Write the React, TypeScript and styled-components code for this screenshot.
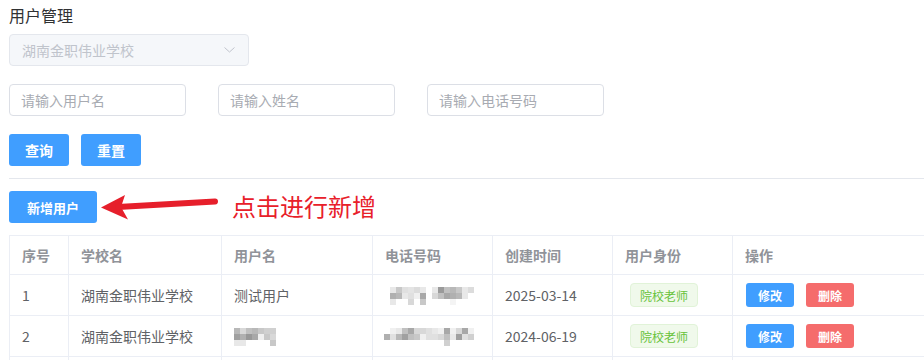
import React, {FC} from 'react';
import styled, {createGlobalStyle} from 'styled-components';

const GlobalStyle = createGlobalStyle`
  html, body {
    margin: 0;
    padding: 0;
    background: #ffffff;
    overflow: hidden;
  }
  body {
    font-family: 'Noto Sans CJK SC', 'Noto Sans', 'Liberation Sans', sans-serif;
    color: #606266;
  }
  * {
    box-sizing: border-box;
  }
`;

type Shade = number;

interface User {
  id: number;
  school: string;
  name?: string;
  nameMosaic?: Shade[][];
  phoneMosaic: Shade[][];
  phoneOffset: number;
  created: string;
  role: string;
}

const users: User[] = [
  {
    id: 1,
    school: '湖南金职伟业学校',
    name: '测试用户',
    phoneMosaic: [
      [0xe8, 0xc8, 0xe0, 0xe4, 0xdc, 0xe8, 0, 0xe8, 0x9a, 0xc0, 0xb8, 0xc8, 0xe8, 0xdc],
      [0xb0, 0xb8, 0xe8, 0xe0, 0xf0, 0xa8, 0, 0xd8, 0xc0, 0xa8, 0xb0, 0xb8, 0xe8, 0],
      [0xe8, 0, 0, 0xd8, 0, 0xc8, 0, 0, 0, 0, 0xf4, 0, 0, 0],
    ],
    phoneOffset: 17,
    created: '2025-03-14',
    role: '院校老师',
  },
  {
    id: 2,
    school: '湖南金职伟业学校',
    nameMosaic: [
      [0xb8, 0xd8, 0xc0, 0xb8, 0xc8, 0xd0, 0xd0],
      [0xa0, 0xb0, 0x98, 0xa8, 0xf0, 0xc8, 0xd8],
      [0xe8, 0xe8, 0, 0, 0, 0, 0xc8],
    ],
    phoneMosaic: [
      [0, 0xf0, 0xe8, 0xc0, 0xa8, 0xd8, 0xd8, 0xe0, 0xe8, 0xf0, 0xa8, 0xf0, 0xd8, 0xa8, 0xf0],
      [0xb0, 0xe0, 0xb8, 0xa0, 0xc0, 0xc8, 0xf0, 0xe0, 0xe0, 0xd8, 0xc0, 0xe8, 0xa0, 0xe0, 0xd0],
      [0, 0, 0, 0, 0, 0, 0, 0, 0, 0, 0xd0, 0, 0, 0, 0],
    ],
    phoneOffset: 11,
    created: '2024-06-19',
    role: '院校老师',
  },
];

const Mosaic: FC<{cells: Shade[][]; offset?: number}> = ({cells, offset = 0}) => (
  <MosaicGrid $offset={offset}>
    {cells.map((row, r) => (
      <MosaicRow key={r}>
        {row.map((shade, c) => (
          <Pixel key={c} $shade={shade} />
        ))}
      </MosaicRow>
    ))}
  </MosaicGrid>
);

const Chevron: FC = () => (
  <svg width="11" height="6" viewBox="0 0 11 6" fill="none">
    <path d="M0.5 0.5 L5.5 5 L10.5 0.5" stroke="#c0c4cc" strokeWidth="1" />
  </svg>
);

const RedArrow: FC = () => (
  <svg width="124" height="30" viewBox="0 0 124 30">
    <path d="M3 15.5 L27 3 L23 15 L30 27.5 Z" fill="#e61f2b" />
    <path d="M20 15 L117 9.5" stroke="#e61f2b" strokeWidth="6" strokeLinecap="round" />
  </svg>
);

const App: FC = () => (
  <>
    <GlobalStyle />
    <Page>
      <Title>用户管理</Title>
      <SchoolSelect>
        <span>湖南金职伟业学校</span>
        <Chevron />
      </SchoolSelect>
      <FilterRow>
        <TextInput placeholder="请输入用户名" />
        <TextInput placeholder="请输入姓名" />
        <TextInput placeholder="请输入电话号码" />
      </FilterRow>
      <ButtonRow>
        <PrimaryButton>查询</PrimaryButton>
        <PrimaryButton>重置</PrimaryButton>
      </ButtonRow>
      <Divider />
      <AddRow>
        <PrimaryButton $wide>新增用户</PrimaryButton>
        <RedArrow />
        <Annotation>点击进行新增</Annotation>
      </AddRow>
      <Table>
        <colgroup>
          <col style={{width: 59}} />
          <col style={{width: 153}} />
          <col style={{width: 151}} />
          <col style={{width: 120}} />
          <col style={{width: 120}} />
          <col style={{width: 120}} />
          <col />
        </colgroup>
        <thead>
          <tr>
            <Th>序号</Th>
            <Th>学校名</Th>
            <Th>用户名</Th>
            <Th>电话号码</Th>
            <Th>创建时间</Th>
            <Th>用户身份</Th>
            <Th>操作</Th>
          </tr>
        </thead>
        <tbody>
          {users.map(u => (
            <tr key={u.id}>
              <Td>{u.id}</Td>
              <Td>{u.school}</Td>
              <Td>{u.name ?? (u.nameMosaic && <Mosaic cells={u.nameMosaic} />)}</Td>
              <Td>
                <Mosaic cells={u.phoneMosaic} offset={u.phoneOffset - 12} />
              </Td>
              <Td>{u.created}</Td>
              <Td>
                <RoleTag>{u.role}</RoleTag>
              </Td>
              <Td>
                <Actions>
                  <SmallButton $kind="primary">修改</SmallButton>
                  <SmallButton $kind="danger">删除</SmallButton>
                </Actions>
              </Td>
            </tr>
          ))}
          <tr>
            <Td />
            <Td />
            <Td />
            <Td />
            <Td />
            <Td />
            <Td />
          </tr>
        </tbody>
      </Table>
    </Page>
  </>
);

export default App;

const Page = styled.div`
  width: 924px;
  height: 360px;
  padding: 4px 0 0 9px;
  overflow: hidden;
`;

const Title = styled.div`
  font-size: 16px;
  line-height: 22px;
  height: 22px;
  color: #303133;
`;

const SchoolSelect = styled.div`
  display: flex;
  align-items: center;
  justify-content: space-between;
  width: 240px;
  height: 32px;
  margin-top: 8px;
  padding: 0 13px 0 12px;
  background: #f5f7fa;
  border: 1px solid #e4e7ed;
  border-radius: 4px;
  color: #c0c4cc;
  font-size: 14px;
`;

const FilterRow = styled.div`
  display: flex;
  gap: 32px;
  margin-top: 18px;
`;

const TextInput = styled.input`
  width: 177px;
  height: 32px;
  padding: 0 11px;
  border: 1px solid #dcdfe6;
  border-radius: 4px;
  font-family: inherit;
  font-size: 14px;
  color: #606266;
  outline: none;
  &::placeholder {
    color: #a8abb2;
  }
`;

const ButtonRow = styled.div`
  display: flex;
  gap: 12px;
  margin-top: 18px;
`;

const PrimaryButton = styled.button<{$wide?: boolean}>`
  width: ${p => (p.$wide ? '88px' : '60px')};
  height: 32px;
  padding: 0;
  border: none;
  border-radius: 3px;
  background: #409eff;
  color: #ffffff;
  font-family: inherit;
  font-size: ${p => (p.$wide ? '13px' : '14px')};
  font-weight: 600;
  cursor: pointer;
`;

const Divider = styled.div`
  height: 1px;
  margin-top: 12px;
  background: #e4e7ed;
`;

const AddRow = styled.div`
  display: flex;
  align-items: center;
  height: 32px;
  margin-top: 12px;
  svg {
    margin-left: 1px;
    margin-top: -1px;
  }
`;

const Annotation = styled.span`
  margin-left: 10px;
  margin-top: -3px;
  font-size: 24px;
  line-height: 30px;
  color: #e8202a;
`;

const Table = styled.table`
  width: 1000px;
  margin-top: 12px;
  border-collapse: collapse;
  table-layout: fixed;
  font-size: 14px;
`;

const Th = styled.th`
  height: 39px;
  padding: 0 12px;
  border: 1px solid #ebeef5;
  text-align: left;
  color: #909399;
  font-weight: 600;
`;

const Td = styled.td`
  height: 41px;
  padding: 0 12px;
  border: 1px solid #ebeef5;
  color: #606266;
  white-space: nowrap;
`;

const MosaicGrid = styled.div<{$offset: number}>`
  display: flex;
  flex-direction: column;
  margin-left: ${p => p.$offset}px;
  margin-top: 2px;
`;

const MosaicRow = styled.div`
  display: flex;
`;

const Pixel = styled.span<{$shade: Shade}>`
  width: 6px;
  height: 6px;
  background: ${p =>
    p.$shade ? `rgb(${p.$shade}, ${p.$shade}, ${p.$shade})` : 'transparent'};
`;

const RoleTag = styled.span`
  display: inline-flex;
  align-items: center;
  height: 24px;
  margin-left: 5px;
  padding: 0 9px;
  background: #f0f9eb;
  border: 1px solid #e1f3d8;
  border-radius: 4px;
  color: #67c23a;
  font-size: 12px;
`;

const Actions = styled.div`
  display: flex;
  gap: 12px;
  margin-left: 1px;
`;

const SmallButton = styled.button<{$kind: 'primary' | 'danger'}>`
  width: 48px;
  height: 24px;
  padding: 0;
  border: none;
  border-radius: 3px;
  background: ${p => (p.$kind === 'primary' ? '#409eff' : '#f56c6c')};
  color: #ffffff;
  font-family: inherit;
  font-size: 12px;
  font-weight: 600;
  cursor: pointer;
`;
